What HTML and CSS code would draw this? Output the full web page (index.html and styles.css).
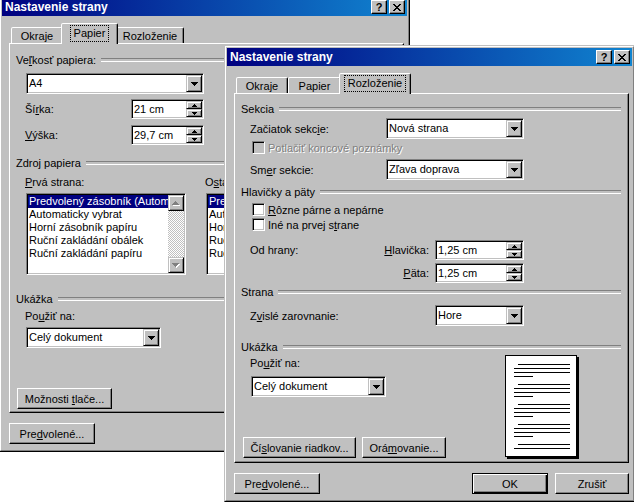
FILE: index.html
```html
<!DOCTYPE html>
<html lang="sk">
<head>
<meta charset="utf-8">
<title>Nastavenie strany</title>
<link rel="stylesheet" href="styles.css">
</head>
<body>

<div class="dlg dlg-1">
  <div class="frame">
    <div class="titlebar">
      <span class="title">Nastavenie strany</span>
      <span class="capbtns">
        <span class="capbtn">?</span>
        <span class="capbtn"><svg width="8" height="7" viewBox="0 0 8 7"><path d="M0 0h2v1H0zM6 0h2v1H6zM1 1h2v1H1zM5 1h2v1H5zM2 2h4v1H2zM3 3h2v1H3zM2 4h4v1H2zM1 5h2v1H1zM5 5h2v1H5zM0 6h2v1H0zM6 6h2v1H6z"/></svg></span>
      </span>
    </div>
    <div class="body">
      <div class="tabs">
        <div class="tab w52"><span class="tl">Okraje</span></div>
        <div class="tab sel w57"><span class="tl">Papier</span></div>
        <div class="tab w68"><span class="tl">Rozloženie</span></div>
      </div>
      <div class="panel">
        <div class="ghead mt9"><span>Ve<u>ľ</u>kosť papiera:</span></div>
        <div class="field combo w178 ml10 mt6"><span class="cv">A4</span><span class="dd"><svg width="7" height="4" viewBox="0 0 7 4"><path d="M0 0h7v1H0zM1 1h5v1H1zM2 2h3v1H2zM3 3h1v1H3z"/></svg></span></div>
        <div class="row mt5">
          <span class="lbl w106">Ší<u>r</u>ka:</span>
          <div class="field spin w73"><span class="cv">21 cm</span><span class="sbs"><span class="sb"><svg width="5" height="3" viewBox="0 0 5 3"><path d="M2 0h1v1H2zM1 1h3v1H1zM0 2h5v1H0z"/></svg></span><span class="sb"><svg width="5" height="3" viewBox="0 0 5 3"><path d="M0 0h5v1H0zM1 1h3v1H1zM2 2h1v1H2z"/></svg></span></span></div>
        </div>
        <div class="row mt6">
          <span class="lbl w106"><u>V</u>ýška:</span>
          <div class="field spin w73"><span class="cv">29,7 cm</span><span class="sbs"><span class="sb"><svg width="5" height="3" viewBox="0 0 5 3"><path d="M2 0h1v1H2zM1 1h3v1H1zM0 2h5v1H0z"/></svg></span><span class="sb"><svg width="5" height="3" viewBox="0 0 5 3"><path d="M0 0h5v1H0zM1 1h3v1H1zM2 2h1v1H2z"/></svg></span></span></div>
        </div>
        <div class="ghead mt11"><span>Zdroj papiera</span></div>
        <div class="cols">
          <div class="col">
            <div class="clabel mt5"><u>P</u>rvá strana:</div>
            <div class="field list mt4">
              <div class="items">
                <div class="item sel">Predvolený zásobník (Automatický výber)</div>
                <div class="item">Automaticky vybrat</div>
                <div class="item">Horní zásobník papíru</div>
                <div class="item">Ruční zakládání obálek</div>
                <div class="item">Ruční zakládání papíru</div>
              </div>
              <div class="vscroll">
                <span class="sarrow"><svg width="8" height="5" viewBox="0 0 8 5"><path fill="#fff" d="M4 1h1v1H4zM3 2h3v1H3zM2 3h5v1H2zM1 4h7v1H1z"/><path fill="#808080" d="M3 0h1v1H3zM2 1h3v1H2zM1 2h5v1H1zM0 3h7v1H0z"/></svg></span>
                <span class="track"></span>
                <span class="sarrow"><svg width="8" height="5" viewBox="0 0 8 5"><path fill="#fff" d="M1 1h7v1H1zM2 2h5v1H2zM3 3h3v1H3zM4 4h1v1H4z"/><path fill="#808080" d="M0 0h7v1H0zM1 1h5v1H1zM2 2h3v1H2zM3 3h1v1H3z"/></svg></span>
              </div>
            </div>
          </div>
          <div class="col">
            <div class="clabel mt5">O<u>s</u>tatné strany:</div>
            <div class="field list mt4">
              <div class="items">
                <div class="item sel">Predvolený zásobník (Automatický výber)</div>
                <div class="item">Automaticky vybrat</div>
                <div class="item">Horní zásobník papíru</div>
                <div class="item">Ruční zakládání obálek</div>
                <div class="item">Ruční zakládání papíru</div>
              </div>
              <div class="vscroll">
                <span class="sarrow"></span>
                <span class="track"></span>
                <span class="sarrow"></span>
              </div>
            </div>
          </div>
        </div>
        <div class="ghead mt17"><span>Ukážka</span></div>
        <div class="prow mt1">
          <div class="pleft">
            <div class="plabel mt2">Po<u>u</u>žiť na:</div>
            <div class="field combo w135 ml10 mt4"><span class="cv">Celý dokument</span><span class="dd"><svg width="7" height="4" viewBox="0 0 7 4"><path d="M0 0h7v1H0zM1 1h5v1H1zM2 2h3v1H2zM3 3h1v1H3z"/></svg></span></div>
            <div class="btnrow ml1 mt40"><div class="btn w95"><span>Možnosti <u>t</u>lače...</span></div></div>
          </div>
        </div>
      </div>
      <div class="footer">
        <div class="btn w86"><span>Pre<u>d</u>volené...</span></div>
        <div class="btn def ok"><span>OK</span></div>
        <div class="btn cancel"><span>Zrušiť</span></div>
      </div>
    </div>
  </div>
</div>

<div class="dlg dlg-2">
  <div class="frame">
    <div class="titlebar">
      <span class="title">Nastavenie strany</span>
      <span class="capbtns">
        <span class="capbtn">?</span>
        <span class="capbtn"><svg width="8" height="7" viewBox="0 0 8 7"><path d="M0 0h2v1H0zM6 0h2v1H6zM1 1h2v1H1zM5 1h2v1H5zM2 2h4v1H2zM3 3h2v1H3zM2 4h4v1H2zM1 5h2v1H1zM5 5h2v1H5zM0 6h2v1H0zM6 6h2v1H6z"/></svg></span>
      </span>
    </div>
    <div class="body">
      <div class="tabs">
        <div class="tab w52"><span class="tl">Okraje</span></div>
        <div class="tab w53"><span class="tl">Papier</span></div>
        <div class="tab sel w72"><span class="tl">Rozloženie</span></div>
      </div>
      <div class="panel">
        <div class="ghead mt8"><span>Sekcia</span></div>
        <div class="row mt2">
          <span class="lbl w136">Začiatok sekc<u>i</u>e:</span>
          <div class="field combo w138"><span class="cv">Nová strana</span><span class="dd"><svg width="7" height="4" viewBox="0 0 7 4"><path d="M0 0h7v1H0zM1 1h5v1H1zM2 2h3v1H2zM3 3h1v1H3z"/></svg></span></div>
        </div>
        <div class="chkrow dis mt2"><span class="chk"></span><span class="ctext">Potlačiť koncové poznámky</span></div>
        <div class="row mt5">
          <span class="lbl w136">Sm<u>e</u>r sekcie:</span>
          <div class="field combo w138"><span class="cv">Zľava doprava</span><span class="dd"><svg width="7" height="4" viewBox="0 0 7 4"><path d="M0 0h7v1H0zM1 1h5v1H1zM2 2h3v1H2zM3 3h1v1H3z"/></svg></span></div>
        </div>
        <div class="ghead mt5"><span>Hlavičky a päty</span></div>
        <div class="chkrow mt4"><span class="chk"></span><span class="ctext"><u>R</u>ôzne párne a nepárne</span></div>
        <div class="chkrow mt2"><span class="chk"></span><span class="ctext">Iné na prvej s<u>t</u>rane</span></div>
        <div class="row mt9">
          <span class="lbl w120">Od hrany:</span>
          <span class="rlbl"><u>H</u>lavička:</span>
          <div class="field spin w89"><span class="cv">1,25 cm</span><span class="sbs"><span class="sb"><svg width="5" height="3" viewBox="0 0 5 3"><path d="M2 0h1v1H2zM1 1h3v1H1zM0 2h5v1H0z"/></svg></span><span class="sb"><svg width="5" height="3" viewBox="0 0 5 3"><path d="M0 0h5v1H0zM1 1h3v1H1zM2 2h1v1H2z"/></svg></span></span></div>
        </div>
        <div class="row mt3">
          <span class="lbl w120"></span>
          <span class="rlbl"><u>P</u>äta:</span>
          <div class="field spin w89"><span class="cv">1,25 cm</span><span class="sbs"><span class="sb"><svg width="5" height="3" viewBox="0 0 5 3"><path d="M2 0h1v1H2zM1 1h3v1H1zM0 2h5v1H0z"/></svg></span><span class="sb"><svg width="5" height="3" viewBox="0 0 5 3"><path d="M0 0h5v1H0zM1 1h3v1H1zM2 2h1v1H2z"/></svg></span></span></div>
        </div>
        <div class="ghead mt2"><span>Strana</span></div>
        <div class="row mt6">
          <span class="lbl w185">Z<u>v</u>islé zarovnanie:</span>
          <div class="field combo w89"><span class="cv">Hore</span><span class="dd"><svg width="7" height="4" viewBox="0 0 7 4"><path d="M0 0h7v1H0zM1 1h5v1H1zM2 2h3v1H2zM3 3h1v1H3z"/></svg></span></div>
        </div>
        <div class="ghead mt14"><span>Ukážka</span></div>
        <div class="prow mt1">
          <div class="pleft">
            <div class="plabel mt1">Po<u>u</u>žiť na:</div>
            <div class="field combo w135 ml10 mt6"><span class="cv">Celý dokument</span><span class="dd"><svg width="7" height="4" viewBox="0 0 7 4"><path d="M0 0h7v1H0zM1 1h5v1H1zM2 2h3v1H2zM3 3h1v1H3z"/></svg></span></div>
            <div class="btnrow ml2 mt40">
              <div class="btn w113"><span>Čí<u>s</u>lovanie riadkov...</span></div>
              <div class="btn w84"><span>Orá<u>m</u>ovanie...</span></div>
            </div>
          </div>
          <svg class="page" width="74" height="104" viewBox="0 0 74 104">
            <rect x="2" y="2" width="72" height="102" fill="#000"/>
            <rect x="0.5" y="0.5" width="71" height="101" fill="#fff" stroke="#000"/>
            <g fill="#000">
              <rect x="13" y="9" width="52" height="1"/><rect x="9" y="13" width="56" height="1"/><rect x="9" y="17" width="56" height="1"/><rect x="9" y="21" width="19" height="1"/>
              <rect x="13" y="29" width="52" height="1"/><rect x="9" y="33" width="56" height="1"/><rect x="9" y="37" width="56" height="1"/><rect x="9" y="41" width="19" height="1"/>
              <rect x="13" y="49" width="52" height="1"/><rect x="9" y="53" width="56" height="1"/><rect x="9" y="57" width="56" height="1"/><rect x="9" y="61" width="19" height="1"/>
              <rect x="13" y="69" width="52" height="1"/><rect x="9" y="73" width="56" height="1"/><rect x="9" y="77" width="56" height="1"/><rect x="9" y="81" width="19" height="1"/>
              <rect x="13" y="89" width="52" height="1"/><rect x="9" y="93" width="56" height="1"/>
            </g>
          </svg>
        </div>
      </div>
      <div class="footer">
        <div class="btn w86"><span>Pre<u>d</u>volené...</span></div>
        <div class="btn def ok"><span>OK</span></div>
        <div class="btn cancel"><span>Zrušiť</span></div>
      </div>
    </div>
  </div>
</div>

</body>
</html>
```

FILE: styles.css
```css
* { box-sizing: border-box; }
html, body { margin: 0; padding: 0; }
body {
  position: relative;
  width: 634px;
  height: 503px;
  overflow: hidden;
  background: #fff;
  font-family: "Liberation Sans", Arial, sans-serif;
  font-size: 11px;
  line-height: 14px;
  color: #000;
}
u { text-decoration: underline; text-underline-offset: 1px; }

/* window */
.dlg {
  position: absolute;
  width: 411px;
  height: 457px;
  background: #c0c0c0;
  border: 1px solid;
  border-color: #c0c0c0 #000 #000 #c0c0c0;
}
.dlg-1 { left: -1px; top: -5px; }
.dlg-2 { left: 224px; top: 45px; }
.frame {
  height: 100%;
  border: 1px solid;
  border-color: #fff #808080 #808080 #fff;
  padding: 1px;
  display: flex;
  flex-direction: column;
}
.titlebar {
  flex: none;
  height: 18px;
  display: flex;
  align-items: center;
  padding: 0 2px 0 3px;
  background: linear-gradient(90deg, #000080, #1084d0);
  color: #fff;
  font-weight: bold;
  font-size: 12px;
}
.title { flex: 1; white-space: nowrap; }
.capbtns { display: flex; gap: 2px; }
.capbtn {
  width: 16px;
  height: 14px;
  display: flex;
  align-items: center;
  justify-content: center;
  background: #c0c0c0;
  color: #000;
  border: 1px solid;
  border-color: #fff #000 #000 #fff;
  box-shadow: inset -1px -1px #808080;
  font-size: 11px;
  font-weight: bold;
  line-height: 12px;
}

.body { flex: 1; padding: 7px 3px 0 7px; }

/* tabs */
.tabs {
  display: flex;
  align-items: flex-end;
  height: 20px;
  padding-left: 2px;
  position: relative;
  z-index: 1;
}
.tab {
  height: 16px;
  display: flex;
  align-items: center;
  justify-content: center;
  white-space: nowrap;
  background: #c0c0c0;
  border: 1px solid;
  border-bottom: 0;
  border-color: #fff #000 transparent #fff;
  box-shadow: inset -1px 0 #808080;
  border-radius: 2px 2px 0 0;
}
.tab.sel {
  height: 21px;
  margin: 0 -2px -1px;
  position: relative;
  z-index: 2;
  align-items: flex-start;
  padding-top: 2px;
}
.tab.sel .tl { outline: 1px dotted #000; padding: 1px 3px; line-height: 13px; }

.panel {
  height: 370px;
  border: 1px solid;
  border-color: #fff #000 #000 #fff;
  box-shadow: inset -1px -1px #808080;
  padding: 0 7px 0 6px;
}

/* group header */
.ghead {
  display: flex;
  align-items: center;
  height: 14px;
  white-space: nowrap;
}
.ghead::after {
  content: "";
  flex: 1;
  height: 2px;
  margin-left: 5px;
  border-top: 1px solid #808080;
  border-bottom: 1px solid #fff;
}

/* sunken fields */
.field {
  display: flex;
  border: 1px solid;
  border-color: #808080 #fff #fff #808080;
  box-shadow: inset 1px 1px #000, inset -1px -1px #c0c0c0;
  padding: 1px;
  background: #fff;
}
.combo { height: 21px; }
.spin { height: 20px; }
.cv { flex: 1; padding-left: 1px; line-height: 17px; white-space: nowrap; overflow: hidden; }
.spin .cv { line-height: 16px; }
.dd, .sb, .sarrow {
  display: flex;
  align-items: center;
  justify-content: center;
  background: #c0c0c0;
  border: 1px solid;
  border-color: #c0c0c0 #000 #000 #c0c0c0;
  box-shadow: inset 1px 1px #fff, inset -1px -1px #808080;
}
.dd { width: 16px; flex: none; }
.sbs { width: 16px; flex: none; display: flex; flex-direction: column; }
.sb { flex: 1; }

/* checkboxes */
.chkrow {
  display: flex;
  align-items: center;
  height: 13px;
  padding-left: 11px;
  white-space: nowrap;
}
.chk {
  width: 13px;
  height: 13px;
  flex: none;
  background: #fff;
  border: 1px solid;
  border-color: #808080 #fff #fff #808080;
  box-shadow: inset 1px 1px #000, inset -1px -1px #c0c0c0;
}
.ctext { margin-left: 3px; }
.chkrow.dis .chk { background: #c0c0c0; }
.chkrow.dis .ctext { color: #808080; text-shadow: 1px 1px 0 #fff; }

/* rows */
.row { display: flex; align-items: center; }
.lbl { margin-left: 9px; flex: none; white-space: nowrap; }
.rlbl { width: 65px; flex: none; text-align: right; padding-right: 6px; white-space: nowrap; }

/* list boxes */
.cols { display: flex; padding-left: 9px; }
.col { width: 180px; flex: none; }
.clabel { white-space: nowrap; }
.list { width: 160px; height: 82px; margin-left: 1px; }
.items { flex: 1; overflow: hidden; }
.item { height: 13px; line-height: 13px; padding-left: 1px; white-space: nowrap; }
.item.sel { background: #000080; color: #fff; }
.vscroll { width: 16px; flex: none; display: flex; flex-direction: column; }
.sarrow { height: 16px; flex: none; }
.track {
  flex: 1;
  background: repeating-conic-gradient(#c0c0c0 0 25%, #fff 0 50%) 0 0 / 2px 2px;
}

/* preview area */
.prow { display: flex; align-items: flex-start; }
.pleft { width: 264px; flex: none; }
.plabel { margin-left: 9px; white-space: nowrap; }
.page { display: block; flex: none; }
.btnrow { display: flex; gap: 6px; }

/* push buttons */
.btn {
  height: 21px;
  flex: none;
  display: flex;
  align-items: center;
  justify-content: center;
  white-space: nowrap;
  background: #c0c0c0;
  border: 1px solid;
  border-color: #fff #000 #000 #fff;
  box-shadow: inset -1px -1px #808080;
}
.btn.def {
  border-color: #000;
  box-shadow: inset 1px 1px #fff, inset -1px -1px #000, inset -2px -2px #808080;
}
.footer { display: flex; margin-top: 10px; height: 21px; width: 395px; }
.ok { margin-left: auto; width: 76px; }
.cancel { width: 74px; margin-left: 7px; }

/* sizes and spacing */
.w52 { width: 52px; }
.w53 { width: 53px; }
.w57 { width: 57px; }
.w68 { width: 68px; }
.w72 { width: 72px; }
.w73 { width: 73px; }
.w84 { width: 84px; }
.w86 { width: 86px; }
.w89 { width: 89px; }
.w95 { width: 95px; }
.w106 { width: 106px; }
.w113 { width: 113px; }
.w120 { width: 120px; }
.w135 { width: 135px; }
.w136 { width: 136px; }
.w138 { width: 138px; }
.w178 { width: 178px; }
.w185 { width: 185px; }
.ml1 { margin-left: 1px; }
.ml2 { margin-left: 2px; }
.ml10 { margin-left: 10px; }
.mt1 { margin-top: 1px; }
.mt2 { margin-top: 2px; }
.mt3 { margin-top: 3px; }
.mt4 { margin-top: 4px; }
.mt5 { margin-top: 5px; }
.mt6 { margin-top: 6px; }
.mt8 { margin-top: 8px; }
.mt9 { margin-top: 9px; }
.mt11 { margin-top: 11px; }
.mt14 { margin-top: 14px; }
.mt17 { margin-top: 17px; }
.mt40 { margin-top: 40px; }
```
